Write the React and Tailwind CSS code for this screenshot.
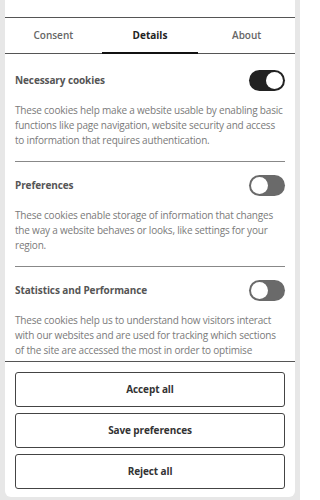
import React from "react";

function Toggle({ on }) {
  return (
    <div
      className={
        "relative h-[21px] w-[36px] shrink-0 rounded-full " +
        (on ? "bg-[#222222]" : "bg-[#6a6a6a]")
      }
    >
      <div
        className={
          "absolute top-[2px] h-[17px] w-[17px] rounded-full bg-white " +
          (on ? "right-[2px]" : "left-[2px]")
        }
      />
    </div>
  );
}

function Section({ title, on, children, first, last }) {
  return (
    <div
      className={
        (first ? "pt-[16px] " : "pt-[13px] ") +
        (last ? "" : "pb-[13px] border-b border-[#888888]")
      }
    >
      <div className="flex h-[21px] items-center justify-between">
        <span className="text-[10px] font-bold tracking-[-0.1px] text-[#555555]">
          {title}
        </span>
        <Toggle on={on} />
      </div>
      <p className="mt-[12px] text-[10px] leading-[15px] tracking-[-0.2px] text-[#7a7a7a]">
        {children}
      </p>
    </div>
  );
}

export default function App() {
  return (
    <div
      className="h-[500px] w-[300px] overflow-hidden bg-[#e7e7e7] px-[5px]"
      style={{ fontFamily: '"Open Sans", sans-serif' }}
    >
      <div className="flex h-[497px] flex-col rounded-b-[6px] bg-white">
        <div className="h-[18px] shrink-0 border-b border-[#555555]" />
        <div className="grid h-[36px] shrink-0 grid-cols-3 border-b border-[#555555]">
          <div className="flex items-center justify-center text-[10px] font-semibold text-[#666666]">
            Consent
          </div>
          <div className="relative flex items-center justify-center text-[10px] font-bold text-[#222222]">
            Details
            <div className="absolute bottom-[-1px] left-0 right-0 h-[2px] bg-[#111111]" />
          </div>
          <div className="flex items-center justify-center text-[10px] font-semibold text-[#666666]">
            About
          </div>
        </div>
        <div className="min-h-0 flex-1 overflow-hidden px-[10px]">
          <Section title="Necessary cookies" on first>
            These cookies help make a website usable by enabling basic
            functions like page navigation, website security and access to
            information that requires authentication.
          </Section>
          <Section title="Preferences">
            These cookies enable storage of information that changes the way a
            website behaves or looks, like settings for your region.
          </Section>
          <Section title="Statistics and Performance" last>
            These cookies help us to understand how visitors interact with our
            websites and are used for tracking which sections of the site are
            accessed the most in order to optimise
            <br />
            their content and improve the experience.
          </Section>
        </div>
        <div className="flex shrink-0 flex-col gap-[6px] border-t border-[#555555] px-[10px] pb-[8px] pt-[10px]">
          {["Accept all", "Save preferences", "Reject all"].map((t) => (
            <button
              key={t}
              className="flex h-[35px] items-center justify-center rounded-[3px] border-[1.5px] border-[#444444] bg-white text-[10px] font-bold tracking-[-0.1px] text-[#333333]"
            >
              {t}
            </button>
          ))}
        </div>
      </div>
    </div>
  );
}
